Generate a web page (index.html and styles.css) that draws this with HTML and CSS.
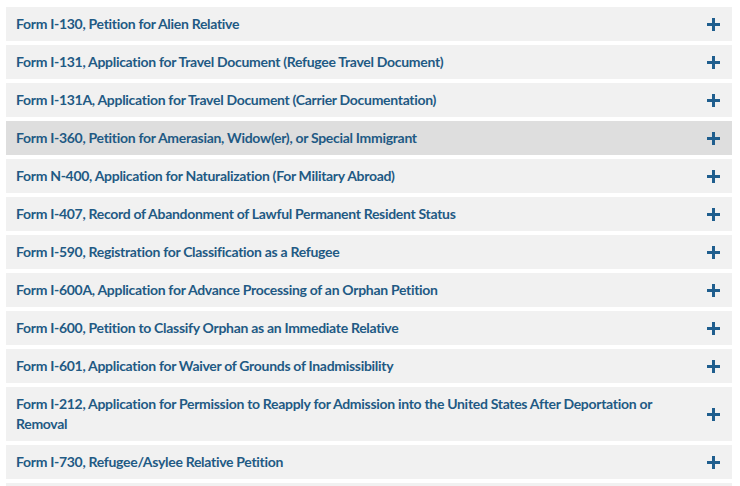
FILE: index.html
```html
<!DOCTYPE html>
<html>
<head>
<meta charset="utf-8">
<link rel="stylesheet" href="styles.css">
</head>
<body>
<ul class="accordion">
  <li class="row"><span class="label">Form I-130, Petition for Alien Relative</span><span class="plus"></span></li>
  <li class="row"><span class="label">Form I-131, Application for Travel Document (Refugee Travel Document)</span><span class="plus"></span></li>
  <li class="row"><span class="label">Form I-131A, Application for Travel Document (Carrier Documentation)</span><span class="plus"></span></li>
  <li class="row hover"><span class="label">Form I-360, Petition for Amerasian, Widow(er), or Special Immigrant</span><span class="plus"></span></li>
  <li class="row"><span class="label">Form N-400, Application for Naturalization (For Military Abroad)</span><span class="plus"></span></li>
  <li class="row"><span class="label">Form I-407, Record of Abandonment of Lawful Permanent Resident Status</span><span class="plus"></span></li>
  <li class="row"><span class="label">Form I-590, Registration for Classification as a Refugee</span><span class="plus"></span></li>
  <li class="row"><span class="label">Form I-600A, Application for Advance Processing of an Orphan Petition</span><span class="plus"></span></li>
  <li class="row"><span class="label">Form I-600, Petition to Classify Orphan as an Immediate Relative</span><span class="plus"></span></li>
  <li class="row"><span class="label">Form I-601, Application for Waiver of Grounds of Inadmissibility</span><span class="plus"></span></li>
  <li class="row"><span class="label">Form I-212, Application for Permission to Reapply for Admission into the United States After Deportation or Removal</span><span class="plus"></span></li>
  <li class="row"><span class="label">Form I-730, Refugee/Asylee Relative Petition</span><span class="plus"></span></li>
  <li class="row"><span class="label"></span><span class="plus"></span></li>
</ul>
</body>
</html>
```
FILE: styles.css
```css
html, body {
  margin: 0;
  padding: 0;
  background: #ffffff;
  overflow: hidden;
  height: 486px;
}
body {
  font-family: "Lato", "Liberation Sans", sans-serif;
}
.accordion {
  list-style: none;
  margin: 0;
  padding: 7px 8px 0 6px;
  display: flex;
  flex-direction: column;
  gap: 4px;
}
.row {
  display: flex;
  align-items: center;
  justify-content: space-between;
  gap: 30px;
  padding: 7px 12px 7px 10px;
  min-height: 20px;
  background: #f1f1f1;
  color: #1f5a84;
  font-size: 14px;
  font-weight: 700;
  line-height: 20px;
  letter-spacing: -0.3px;
}
.row.hover {
  background: #dedede;
}
.label {
  flex: 1;
}
.plus {
  position: relative;
  flex: none;
  width: 13px;
  height: 13px;
}
.plus::before,
.plus::after {
  content: "";
  position: absolute;
  background: #1f5e8e;
}
.plus::before {
  left: 0;
  top: 5px;
  width: 13px;
  height: 3px;
}
.plus::after {
  left: 5px;
  top: 0;
  width: 3px;
  height: 13px;
}
```
